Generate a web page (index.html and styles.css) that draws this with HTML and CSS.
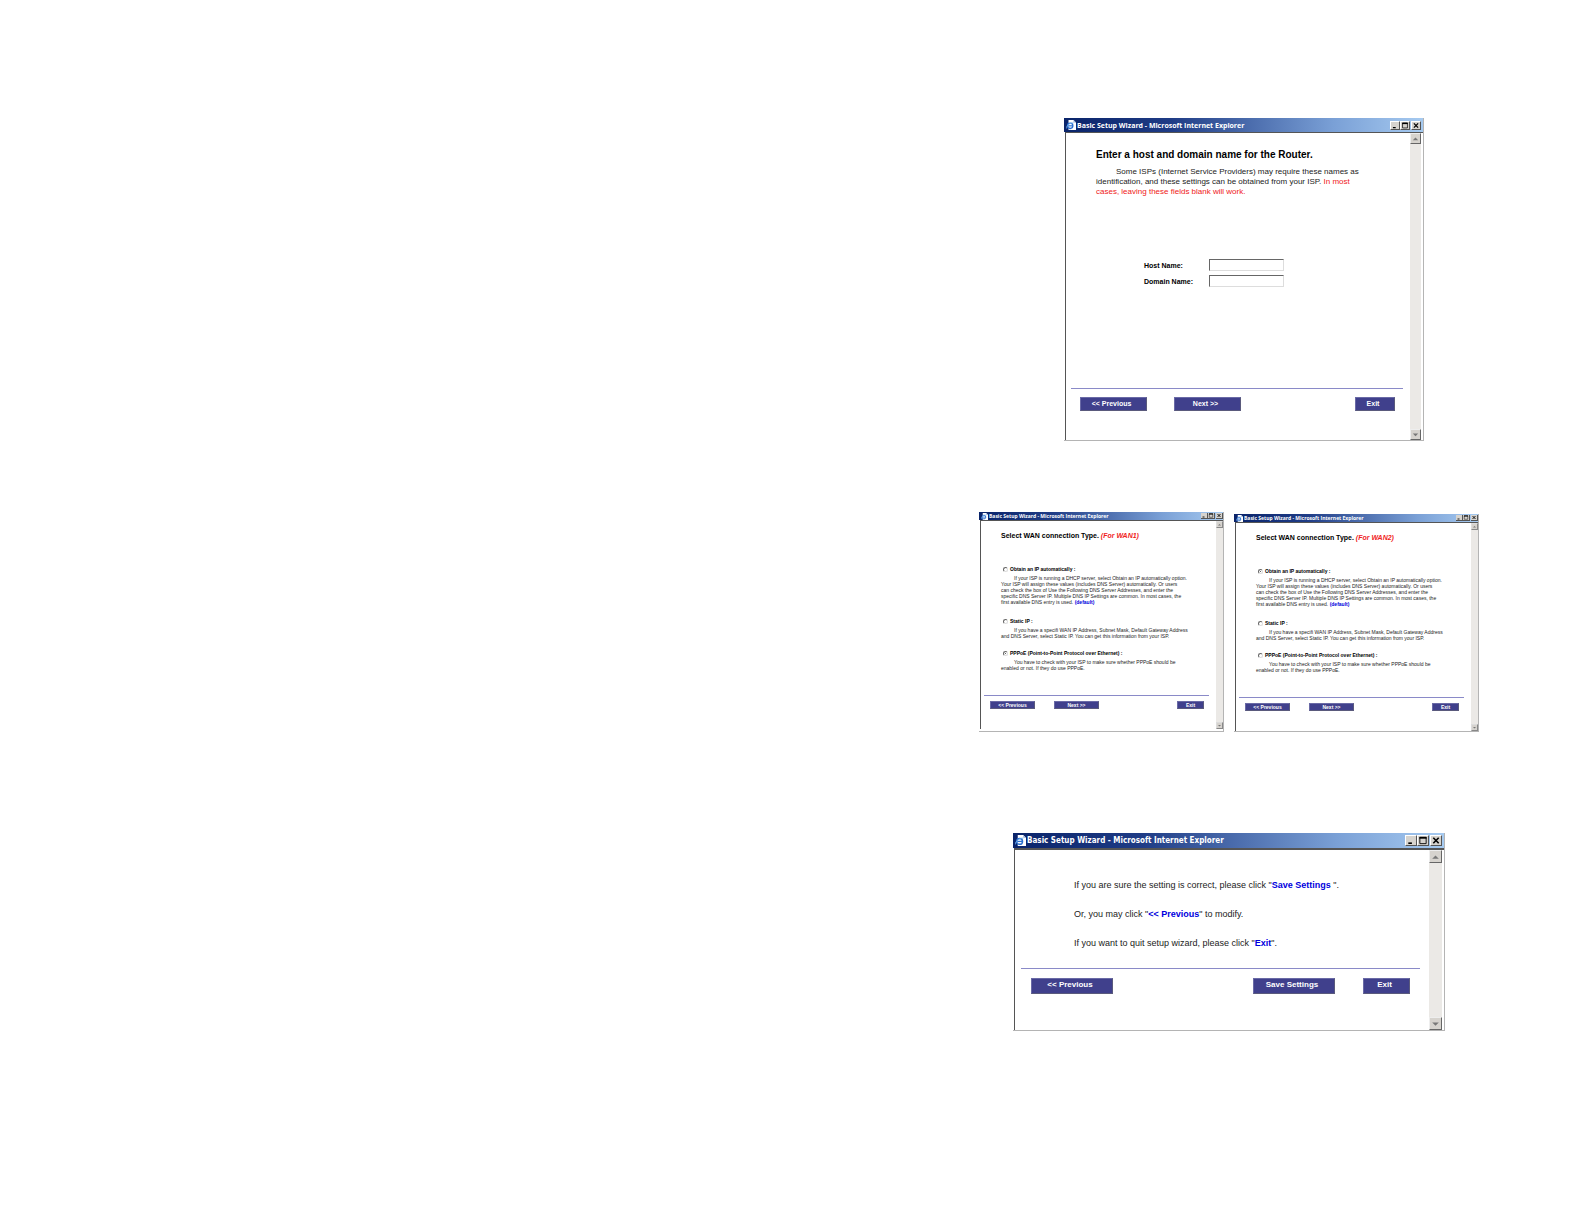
FILE: index.html
```html
<!DOCTYPE html>
<html lang="en">
<head>
<meta charset="utf-8">
<title>Basic Setup Wizard</title>
<link rel="stylesheet" href="styles.css">
</head>
<body>
<svg class="sprite" aria-hidden="true">
  <symbol id="page-e" viewBox="0 0 12 12">
    <path d="M3 0h6l3 3v9H3z" fill="#fff"/>
    <path d="M9 0v3h3z" fill="#9db4d8"/>
    <circle cx="5" cy="7" r="3.2" fill="#fff" stroke="#2a6fd0" stroke-width="1.6"/>
    <path d="M2.500 7h5.500" stroke="#2a6fd0" stroke-width="1.400"/>
    <path d="M0 10.500C1 6 5 3 9 3.500" fill="none" stroke="#6fb0ee" stroke-width="1"/>
  </symbol>
  <symbol id="minimize" viewBox="0 0 10 10"><path d="M2 8h4" stroke="#000" stroke-width="1.800"/></symbol>
  <symbol id="maximize" viewBox="0 0 10 10"><path d="M1.500 1.500h7v7h-7z" fill="none" stroke="#000" stroke-width="1"/><path d="M1 2h8" stroke="#000" stroke-width="2"/></symbol>
  <symbol id="close" viewBox="0 0 10 10"><path d="M2 2l6 6M8 2l-6 6" stroke="#000" stroke-width="1.800"/></symbol>
  <symbol id="up" viewBox="0 0 10 10"><path d="M2 7h6L5 4z" fill="#777"/></symbol>
  <symbol id="down" viewBox="0 0 10 10"><path d="M2 4h6L5 7z" fill="#777"/></symbol>
</svg>
<main class="page">
  <section class="window medium">
    <header class="titlebar">
      <svg class="app-icon"><use href="#page-e"/></svg>
      <span class="title">Basic Setup Wizard - Microsoft Internet Explorer</span>
      <button class="caption" aria-label="Minimize"><svg><use href="#minimize"/></svg></button>
      <button class="caption" aria-label="Maximize"><svg><use href="#maximize"/></svg></button>
      <button class="caption close" aria-label="Close"><svg><use href="#close"/></svg></button>
    </header>
    <div class="client">
      <div class="content">
        <div class="copy">
          <h2>Enter a host and domain name for the Router.</h2>
          <p class="indent">Some ISPs (Internet Service Providers) may require these names as<br>identification, and these settings can be obtained from your ISP. <span class="red">In most<br>cases, leaving these fields blank will work.</span></p>
          <form class="fields">
            <label for="host">Host Name:</label><input id="host" type="text">
            <label for="domain">Domain Name:</label><input id="domain" type="text">
          </form>
        </div>
        <nav class="actions">
          <button class="action">&lt;&lt; Previous</button>
          <button class="action">Next &gt;&gt;</button>
          <button class="action exit push">Exit</button>
        </nav>
      </div>
      <div class="scrollbar">
        <button aria-label="Scroll up"><svg><use href="#up"/></svg></button>
        <button aria-label="Scroll down"><svg><use href="#down"/></svg></button>
      </div>
    </div>
  </section>

  <div class="pair">
    <section class="window small">
      <header class="titlebar">
        <svg class="app-icon"><use href="#page-e"/></svg>
        <span class="title">Basic Setup Wizard - Microsoft Internet Explorer</span>
        <button class="caption" aria-label="Minimize"><svg><use href="#minimize"/></svg></button>
        <button class="caption" aria-label="Maximize"><svg><use href="#maximize"/></svg></button>
        <button class="caption close" aria-label="Close"><svg><use href="#close"/></svg></button>
      </header>
      <div class="client">
        <div class="content">
          <form class="copy">
            <h2>Select WAN connection Type. <em class="red">(For WAN1)</em></h2>
            <div class="option auto">
              <label><input type="radio" name="wan1">Obtain an IP automatically :</label>
              <p class="indent">If your ISP is running a DHCP server, select Obtain an IP automatically option.<br>Your ISP will assign these values (includes DNS Server) automatically. Or users<br>can check the box of Use the Following DNS Server Addresses, and enter the<br>specific DNS Server IP. Multiple DNS IP Settings are common. In most cases, the<br>first available DNS entry is used. <b class="blue">(default)</b></p>
            </div>
            <div class="option">
              <label><input type="radio" name="wan1">Static IP :</label>
              <p class="indent">If you have a specifi WAN IP Address, Subnet Mask, Default Gateway Address<br>and DNS Server, select Static IP. You can get this information from your ISP.</p>
            </div>
            <div class="option">
              <label><input type="radio" name="wan1" checked>PPPoE (Point-to-Point Protocol over Ethernet) :</label>
              <p class="indent">You have to check with your ISP to make sure whether PPPoE should be<br>enabled or not. If they do use PPPoE.</p>
            </div>
          </form>
          <nav class="actions">
            <button class="action">&lt;&lt; Previous</button>
            <button class="action">Next &gt;&gt;</button>
            <button class="action exit push">Exit</button>
          </nav>
        </div>
        <div class="scrollbar">
          <button aria-label="Scroll up"><svg><use href="#up"/></svg></button>
          <button aria-label="Scroll down"><svg><use href="#down"/></svg></button>
        </div>
      </div>
    </section>

    <section class="window small">
      <header class="titlebar">
        <svg class="app-icon"><use href="#page-e"/></svg>
        <span class="title">Basic Setup Wizard - Microsoft Internet Explorer</span>
        <button class="caption" aria-label="Minimize"><svg><use href="#minimize"/></svg></button>
        <button class="caption" aria-label="Maximize"><svg><use href="#maximize"/></svg></button>
        <button class="caption close" aria-label="Close"><svg><use href="#close"/></svg></button>
      </header>
      <div class="client">
        <div class="content">
          <form class="copy">
            <h2>Select WAN connection Type. <em class="red">(For WAN2)</em></h2>
            <div class="option auto">
              <label><input type="radio" name="wan2" checked>Obtain an IP automatically :</label>
              <p class="indent">If your ISP is running a DHCP server, select Obtain an IP automatically option.<br>Your ISP will assign these values (includes DNS Server) automatically. Or users<br>can check the box of Use the Following DNS Server Addresses, and enter the<br>specific DNS Server IP. Multiple DNS IP Settings are common. In most cases, the<br>first available DNS entry is used. <b class="blue">(default)</b></p>
            </div>
            <div class="option">
              <label><input type="radio" name="wan2">Static IP :</label>
              <p class="indent">If you have a specifi WAN IP Address, Subnet Mask, Default Gateway Address<br>and DNS Server, select Static IP. You can get this information from your ISP.</p>
            </div>
            <div class="option">
              <label><input type="radio" name="wan2">PPPoE (Point-to-Point Protocol over Ethernet) :</label>
              <p class="indent">You have to check with your ISP to make sure whether PPPoE should be<br>enabled or not. If they do use PPPoE.</p>
            </div>
          </form>
          <nav class="actions">
            <button class="action">&lt;&lt; Previous</button>
            <button class="action">Next &gt;&gt;</button>
            <button class="action exit push">Exit</button>
          </nav>
        </div>
        <div class="scrollbar">
          <button aria-label="Scroll up"><svg><use href="#up"/></svg></button>
          <button aria-label="Scroll down"><svg><use href="#down"/></svg></button>
        </div>
      </div>
    </section>
  </div>

  <section class="window large">
    <header class="titlebar">
      <svg class="app-icon"><use href="#page-e"/></svg>
      <span class="title">Basic Setup Wizard - Microsoft Internet Explorer</span>
      <button class="caption" aria-label="Minimize"><svg><use href="#minimize"/></svg></button>
      <button class="caption" aria-label="Maximize"><svg><use href="#maximize"/></svg></button>
      <button class="caption close" aria-label="Close"><svg><use href="#close"/></svg></button>
    </header>
    <div class="client">
      <div class="content">
        <div class="copy">
          <p>If you are sure the setting is correct, please click "<b class="blue">Save Settings</b> ".</p>
          <p>Or, you may click "<b class="blue">&lt;&lt; Previous</b>" to modify.</p>
          <p>If you want to quit setup wizard, please click "<b class="blue">Exit</b>".</p>
        </div>
        <nav class="actions">
          <button class="action">&lt;&lt; Previous</button>
          <button class="action push">Save Settings</button>
          <button class="action exit">Exit</button>
        </nav>
      </div>
      <div class="scrollbar">
        <button aria-label="Scroll up"><svg><use href="#up"/></svg></button>
        <button aria-label="Scroll down"><svg><use href="#down"/></svg></button>
      </div>
    </div>
  </section>
</main>
</body>
</html>
```
FILE: styles.css
```css
* { box-sizing: border-box; }

body {
  margin: 0;
  background: #fff;
  color: #222;
  font-family: "Liberation Sans", Arial, sans-serif;
}

h2, p { margin: 0; }

button, input { font-family: inherit; margin: 0; padding: 0; }

svg { display: block; }

.sprite { position: absolute; width: 0; height: 0; }

.page {
  display: flex;
  flex-direction: column;
  align-items: flex-end;
  padding: 118px 105px 80px;
}

.pair {
  display: flex;
  gap: 10px;
  margin: 71px 0 101px;
}

.pair .window + .window { margin-top: 2px; }

/* Window frame; each size sets its own type scale and bar sizes */
.window {
  display: flex;
  flex-direction: column;
  border: solid #b4b4b4;
  border-width: 0 1px 1px 0;
}

.medium {
  --bar: 14px; --title: 7px; --icon: 10px; --cap-w: 10px; --cap-h: 9px;
  --scroll: 11px; --frame: 1px; --edge: 2px;
  --btn-w: 67px; --btn-h: 14px; --exit-w: 40px; --btn-text: 7px;
  width: 360px;
  margin-right: 55px;
}

.small {
  --bar: 8px; --title: 5px; --icon: 7px; --cap-w: 7px; --cap-h: 6px;
  --scroll: 7px; --frame: 1px; --edge: 0px;
  --btn-w: 45px; --btn-h: 8px; --exit-w: 27px; --btn-text: 5px;
  width: 245px;
}

.large {
  --bar: 15px; --title: 8px; --icon: 11px; --cap-w: 12px; --cap-h: 11px;
  --scroll: 13px; --frame: 2px; --edge: 2px;
  --btn-w: 82px; --btn-h: 16px; --exit-w: 47px; --btn-text: 8px;
  width: 432px;
  margin-right: 34px;
}

.titlebar {
  display: flex;
  align-items: center;
  height: var(--bar);
  padding: 0 var(--edge) 0 2px;
  background: linear-gradient(90deg, #0a246a, #1f3c86 30%, #7aa0d6 75%, #a6caf0);
  color: #fff;
}

.app-icon { width: var(--icon); height: var(--icon); flex: none; }

.title {
  flex: 1;
  margin-left: 1px;
  font: 700 var(--title)/1 "Open Sans", "Noto Sans", sans-serif;
  white-space: nowrap;
}

.large .title { font-family: "DejaVu Sans Condensed", "Open Sans", sans-serif; }

.caption {
  width: var(--cap-w);
  height: var(--cap-h);
  border: 1px solid;
  border-color: #fff #555 #555 #fff;
  background: #d6d3ce;
}

.caption svg, .scrollbar svg { width: 100%; height: 100%; }

.small .caption { border-width: 0 1px 1px 0; }

.caption.close { margin-left: 1px; }

.client {
  display: flex;
  border: solid #555;
  border-width: var(--frame) 0 0 1px;
  margin-left: 1px;
}

.content {
  flex: 1;
  min-width: 0;
  display: flex;
  flex-direction: column;
}

.scrollbar {
  display: flex;
  flex-direction: column;
  justify-content: space-between;
  width: var(--scroll);
  margin-right: var(--edge);
  background: #ebe9e6;
}

.scrollbar button {
  height: var(--scroll);
  border: 1px solid;
  border-color: #eee #666 #666 #eee;
  background: #d6d3ce;
}

.small .scrollbar button { border-color: #ddd #888 #888 #ddd; }

.red { color: #f02020; }
.blue { color: #00d; }

/* Button row under the rule */
.actions {
  display: flex;
  border-top: 1px solid #8a8ac8;
}

.action {
  width: var(--btn-w);
  height: var(--btn-h);
  padding: 0 4px 2px 0;
  border: 1px solid;
  border-color: #6a6aa6 #5a5a7c #5a5a7c #6a6aa6;
  background: #40408c;
  color: #fff;
  font-size: var(--btn-text);
  font-weight: 700;
  line-height: 1;
  white-space: nowrap;
}

.small .action { padding: 0; }

.action.exit { width: var(--exit-w); }
.action.push { margin-left: auto; }

/* Host and domain window */
.medium .copy { padding: 16px 0 0 30px; height: 255px; }
.medium h2 { font-size: 10px; line-height: 12px; color: #000; }
.medium p { margin-top: 6px; font-size: 8px; line-height: 10px; white-space: nowrap; }
.medium .indent { text-indent: 20px; }

.fields {
  display: grid;
  grid-template-columns: 65px 75px;
  row-gap: 4px;
  margin: 62px 0 0 48px;
  align-items: center;
}

.fields label { font-size: 7px; font-weight: 700; color: #000; white-space: nowrap; }

.fields input {
  width: 100%;
  height: 12px;
  border: 1px solid;
  border-color: #666 #ddd #ddd #666;
  background: #fff;
  font-size: 8px;
}

.medium .actions { gap: 27px; margin: 0 7px 0 5px; padding: 8px 8px 29px 9px; }

/* Connection type windows */
.small .copy { padding: 11px 0 0 20px; height: 174px; }
.small h2 { font-size: 7px; line-height: 8px; color: #000; white-space: nowrap; }
.small p { margin-top: 2px; font-size: 5px; line-height: 6px; white-space: nowrap; }
.small .indent { text-indent: 13px; }

.option { margin-top: 10px; }
.option.auto { margin-top: 25px; padding-bottom: 2px; }

.option label {
  display: flex;
  align-items: center;
  gap: 2px;
  margin-left: 2px;
  font-size: 5px;
  line-height: 8px;
  font-weight: 700;
  color: #000;
}

.option input {
  appearance: none;
  width: 5px;
  height: 5px;
  border: 1px solid;
  border-color: #666 #ddd #ddd #666;
  border-radius: 50%;
  background: #fff;
}

.option input:checked { background: #333; background-clip: content-box; padding: 1px; }

.small .actions { gap: 19px; margin: 0 7px 0 3px; padding: 5px 5px 20px 6px; }

/* Save window */
.large .copy {
  display: flex;
  flex-direction: column;
  gap: 17px;
  height: 118px;
  padding: 29px 0 0 59px;
}

.large p { font-size: 9px; line-height: 12px; white-space: nowrap; }
.large .actions { gap: 28px; margin: 0 9px 0 6px; padding: 9px 10px 36px; }
```
